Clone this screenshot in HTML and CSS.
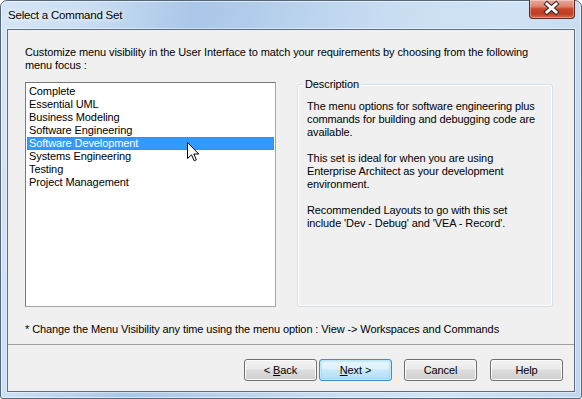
FILE: index.html
```html
<!DOCTYPE html>
<html lang="en">
<head>
<meta charset="utf-8">
<title>Select a Command Set</title>
<link rel="stylesheet" href="styles.css">
</head>
<body>
<div class="window">
  <div class="titlebar">
    <span class="title">Select a Command Set</span>
    <div class="close">
      <svg width="46" height="19" viewBox="0 0 46 19">
        <path d="M18 5 L27 13 M27 5 L18 13" stroke="#3b2a28" stroke-width="5" stroke-linecap="square" fill="none"/>
        <path d="M18 5 L27 13 M27 5 L18 13" stroke="#ffffff" stroke-width="3" stroke-linecap="square" fill="none"/>
      </svg>
    </div>
  </div>
  <div class="client">
    <div class="content">
      <p class="intro">Customize menu visibility in the User Interface to match your requirements by choosing from the following menu focus :</p>
      <div class="main">
        <ul class="list">
          <li>Complete</li>
          <li>Essential UML</li>
          <li>Business Modeling</li>
          <li>Software Engineering</li>
          <li class="selected">Software Development</li>
          <li>Systems Engineering</li>
          <li>Testing</li>
          <li>Project Management</li>
        </ul>
        <div class="group">
          <span class="legend">Description</span>
          <p>The menu options for software engineering plus commands for building and debugging code are available.</p>
          <p>This set is ideal for when you are using Enterprise Architect as your development environment.</p>
          <p>Recommended Layouts to go with this set include 'Dev - Debug' and 'VEA - Record'.</p>
        </div>
      </div>
      <p class="note">* Change the Menu Visibility any time using the menu option : View -&gt; Workspaces and Commands</p>
    </div>
    <div class="buttons">
      <button class="btn btn-back">&lt; <u>B</u>ack</button>
      <button class="btn btn-next"><u>N</u>ext &gt;</button>
      <button class="btn btn-cancel">Cancel</button>
      <button class="btn">Help</button>
    </div>
  </div>
  <svg class="cursor" width="13" height="20" viewBox="0 0 13 20">
    <path d="M0.5 0.5 L0.5 16.5 L4.5 12.8 L7.2 18.8 L9.4 17.8 L6.8 12 L11.8 12 Z" fill="#ffffff" stroke="#000000" stroke-width="1" stroke-linejoin="miter"/>
  </svg>
</div>
</body>
</html>
```

FILE: styles.css
```css
* { box-sizing: border-box; }

html, body {
  margin: 0;
  padding: 0;
  background: #ffffff;
}

body {
  width: 582px;
  height: 399px;
  overflow: hidden;
  font-family: "Liberation Sans", Arial, sans-serif;
  font-size: 11px;
  letter-spacing: -0.1px;
  color: #000;
}

.window {
  position: relative;
  width: 582px;
  height: 399px;
  border: 1px solid #55677b;
  border-radius: 7px 7px 3px 3px;
  padding: 0 6px 6px 6px;
  display: flex;
  flex-direction: column;
  background: linear-gradient(100deg, #d6e6f6 0%, #c9ddf2 14%, #a9c7e9 30%, #b5cfec 42%, #c9ddf2 60%, #d1e3f5 78%, #c0d7f0 100%);
  box-shadow: inset 0 0 0 1px rgba(255, 255, 255, 0.55);
}

.titlebar {
  height: 28px;
  display: flex;
  align-items: flex-start;
  justify-content: space-between;
}

.title {
  margin: 7px 0 0 1px;
  line-height: 14px;
  font-size: 11.5px;
  letter-spacing: -0.2px;
  color: #000;
  text-shadow: 0 0 5px #fff, 0 0 8px rgba(255, 255, 255, 0.8);
}

.close {
  width: 46px;
  height: 19px;
  margin-top: -1px;
  border: 1px solid #5c2a22;
  border-top: none;
  border-radius: 0 0 4px 4px;
  background: linear-gradient(#eaa898 0%, #de8571 35%, #c9472e 50%, #c13c22 75%, #d4684e 100%);
  box-shadow: inset 0 0 0 1px rgba(255, 255, 255, 0.35);
  overflow: hidden;
}

.close svg { display: block; margin: -1px 0 0 -1px; }

.client {
  flex: 1;
  display: flex;
  flex-direction: column;
  background: #f0f0f0;
  border: 1px solid #5e6d7f;
  box-shadow: 0 0 0 1px rgba(255, 255, 255, 0.45);
}

.content {
  padding: 16px 21px 8px 17px;
}

.intro {
  margin: 0 0 10px;
  line-height: 13px;
}

.main {
  display: flex;
  gap: 21px;
  height: 225px;
}

.list {
  list-style: none;
  margin: 0;
  padding: 2px 1px;
  width: 251px;
  flex: none;
  background: #fff;
  border: 1px solid #7a7a7a;
  border-right-color: #a5a5a5;
  border-bottom-color: #a5a5a5;
}

.list li {
  height: 13px;
  line-height: 13px;
  padding-left: 2px;
  white-space: nowrap;
}

.list li.selected {
  background: #3399ff;
  color: #fff;
  outline: 1px dotted #cc6600;
  outline-offset: -1px;
}

.group {
  position: relative;
  width: 256px;
  flex: none;
  margin-top: 2px;
  border: 1px solid #d5dfe5;
  border-radius: 3px;
  box-shadow: inset 0 0 0 1px #fff;
  padding: 15px 12px 0 9px;
}

.legend {
  position: absolute;
  top: -7px;
  left: 5px;
  padding: 0 2px;
  background: #f0f0f0;
  line-height: 13px;
}

.group p {
  margin: 0 0 13px;
  line-height: 13px;
}

.note {
  margin: 16px 0 0;
  line-height: 13px;
}

.buttons {
  flex: 1;
  border-top: 1px solid #a0a0a0;
  display: flex;
  justify-content: flex-end;
  align-items: flex-start;
  padding: 14px 11px 0 0;
}

.btn {
  width: 73px;
  height: 22px;
  padding: 0;
  font-family: "Liberation Sans", Arial, sans-serif;
  font-size: 11px;
  letter-spacing: -0.1px;
  line-height: 20px;
  color: #000;
  text-align: center;
  border: 1px solid #707070;
  border-radius: 3px;
  background: linear-gradient(#f2f2f2 0%, #ebebeb 45%, #dddddd 50%, #cfcfcf 100%);
  box-shadow: inset 0 0 0 1px #fcfcfc;
}

.btn-back { margin-right: 2px; }

.btn-next {
  margin-right: 12px;
  border-color: #3c8fc8;
  background: linear-gradient(#ecf7fd 0%, #ddf1fc 45%, #c6e8fb 50%, #b3dff5 100%);
  box-shadow: inset 0 0 0 1px #bfe9fb, inset 0 0 2px 1px #7fcaf0;
}

.btn-cancel { margin-right: 13px; }

.cursor {
  position: absolute;
  left: 186px;
  top: 141px;
}
```
